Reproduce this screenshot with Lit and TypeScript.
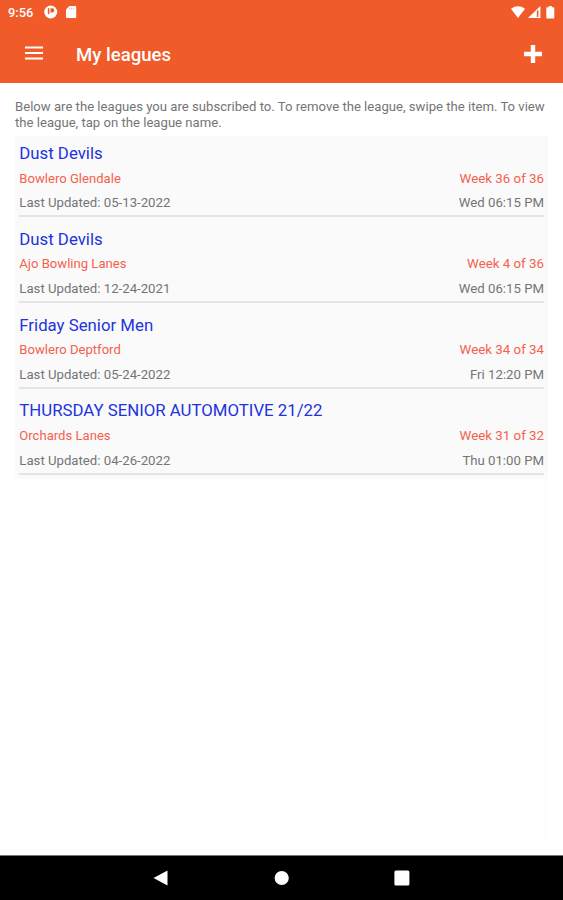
import { LitElement, html, css } from "lit";
import { customElement, property } from "lit/decorators.js";

interface League {
  name: string;
  center: string;
  week: string;
  updated: string;
  time: string;
}

const LEAGUES: League[] = [
  { name: "Dust Devils", center: "Bowlero Glendale", week: "Week 36 of 36", updated: "05-13-2022", time: "Wed 06:15 PM" },
  { name: "Dust Devils", center: "Ajo Bowling Lanes", week: "Week 4 of 36", updated: "12-24-2021", time: "Wed 06:15 PM" },
  { name: "Friday Senior Men", center: "Bowlero Deptford", week: "Week 34 of 34", updated: "05-24-2022", time: "Fri 12:20 PM" },
  { name: "THURSDAY SENIOR AUTOMOTIVE 21/22", center: "Orchards Lanes", week: "Week 31 of 32", updated: "04-26-2022", time: "Thu 01:00 PM" },
];

@customElement("status-bar")
export class StatusBar extends LitElement {
  static styles = css`
    :host { display: flex; align-items: center; height: 24px; padding: 0 6px 0 8px; color: #fff; }
    .clock { font-size: 12.8px; font-weight: 500; width: 36px; line-height: 24px; padding-top: 1px; }
    .left { display: flex; gap: 7px; flex: 1; }
    .right { display: flex; gap: 2px; }
    svg { display: block; }
  `;
  render() {
    return html`
      <span class="clock">9:56</span>
      <div class="left">
        <svg width="14" height="14" viewBox="0 0 14 14">
          <circle cx="6.7" cy="7" r="6.5" fill="#fff" />
          <path d="M4.6 3.2v6" fill="none" stroke="#f15a29" stroke-width="1.5" />
          <path d="M6.5 3.2h1.8a2.1 2.1 0 0 1 0 4.2H6.5z" fill="#f15a29" />
        </svg>
        <svg width="12" height="14" viewBox="0 0 12 14">
          <path d="M4.4 1H10.4a.8.8 0 0 1 .8.8v10.4a.8.8 0 0 1-.8.8H2a1 1 0 0 1-1-1V4.4z" fill="#fff" />
          <path d="M4.6 3v1.600M6.600 3v1.600M8.600 3v1.600" stroke="#f15a29" stroke-width=".7" opacity=".6" />
        </svg>
      </div>
      <div class="right">
        <svg width="14" height="12" viewBox="0 0 14 12">
          <path d="M0 2.7Q7-2.1 14 2.7L7 12z" fill="#fff" />
        </svg>
        <svg width="14" height="12" viewBox="0 0 14 12">
          <path d="M13.400 0V12H1z" fill="#fff" />
          <path d="M9.800 5v6h1.600V3.800z" fill="#f15a29" />
        </svg>
        <svg width="14" height="13" viewBox="0 0 14 13">
          <path d="M5.800 0h3v1.200h1.700a.8.8 0 0 1 .8.8v9.700a.8.8 0 0 1-.8.8H4.100a.8.8 0 0 1-.8-.8V2a.8.8 0 0 1 .8-.8h1.700z" fill="#fff" />
        </svg>
      </div>
    `;
  }
}

@customElement("app-header")
export class AppHeader extends LitElement {
  static styles = css`
    :host { display: flex; align-items: center; height: 59px; padding: 0 20px 0 25px; color: #fff; }
    h1 { margin: 2px 0 0 33px; flex: 1; font-size: 18.6px; line-height: 24px; font-weight: 500; }
    svg { display: block; }
    .menu { margin-bottom: 2px; }
  `;
  render() {
    return html`
      <svg class="menu" width="18" height="14" viewBox="0 0 18 14">
        <path d="M0 1.5h18M0 7h18M0 12.5h18" stroke="#fff" stroke-width="2" />
      </svg>
      <h1>My leagues</h1>
      <svg width="20" height="20" viewBox="0 0 20 20">
        <path d="M10 1v18M1 10h18" stroke="#fff" stroke-width="4.4" />
      </svg>
    `;
  }
}

@customElement("league-item")
export class LeagueItem extends LitElement {
  @property({ attribute: false }) league!: League;
  static styles = css`
    :host { display: block; box-sizing: border-box; height: 85.8px; padding: 6px 4px 0 4.3px; }
    .body { box-sizing: border-box; height: 75.3px; border-bottom: 2px solid #e4e4e4; }
    .name { font-size: 16.8px; line-height: 23.5px; color: #2233dd; }
    .line { display: flex; justify-content: space-between; font-size: 13.2px; line-height: 22px; color: #757575; }
    .accent { color: #f4614d; font-size: 13.1px; line-height: 26.8px; }
    .accent span:last-child { font-size: 13.3px; }
  `;
  render() {
    const l = this.league;
    return html`
      <div class="body">
        <div class="name">${l.name}</div>
        <div class="line accent"><span>${l.center}</span><span>${l.week}</span></div>
        <div class="line"><span>Last Updated: ${l.updated}</span><span>${l.time}</span></div>
      </div>
    `;
  }
}

@customElement("nav-bar")
export class NavBar extends LitElement {
  static styles = css`
    :host { display: flex; justify-content: space-between; align-items: center; box-sizing: border-box; height: 45px; padding: 0 153px; background: #000; border-top: 1px solid #777; }
    svg { display: block; }
  `;
  render() {
    return html`
      <svg width="16" height="16" viewBox="0 0 16 16"><path d="M0.5 8L14.5.4v15.2z" fill="#fff" /></svg>
      <svg width="16" height="16" viewBox="0 0 16 16"><circle cx="7.7" cy="8" r="7.1" fill="#fff" /></svg>
      <svg width="16" height="16" viewBox="0 0 16 16"><rect x=".4" y=".5" width="15" height="15" rx="1.5" fill="#fff" /></svg>
    `;
  }
}

@customElement("app-root")
export class AppRoot extends LitElement {
  static styles = css`
    :host { display: flex; flex-direction: column; height: 900px; background: #fff; font-family: Roboto, "Liberation Sans", sans-serif; }
    .top { height: 83px; background: #f15a29; }
    main { flex: 1; padding: 16px 15px 0; display: flex; flex-direction: column; }
    p { margin: 0; height: 37px; font-size: 13.14px; line-height: 15.5px; color: #757575; white-space: nowrap; }
    .list { flex: 1; margin-bottom: 15px; background: #fefefe; }
    .rows { height: 343px; background: #fafafa; }
  `;
  render() {
    return html`
      <div class="top">
        <status-bar></status-bar>
        <app-header></app-header>
      </div>
      <main>
        <p>Below are the leagues you are subscribed to. To remove the league, swipe the item. To view<br />the league, tap on the league name.</p>
        <div class="list"><div class="rows">${LEAGUES.map((l) => html`<league-item .league=${l}></league-item>`)}</div></div>
      </main>
      <nav-bar></nav-bar>
    `;
  }
}
